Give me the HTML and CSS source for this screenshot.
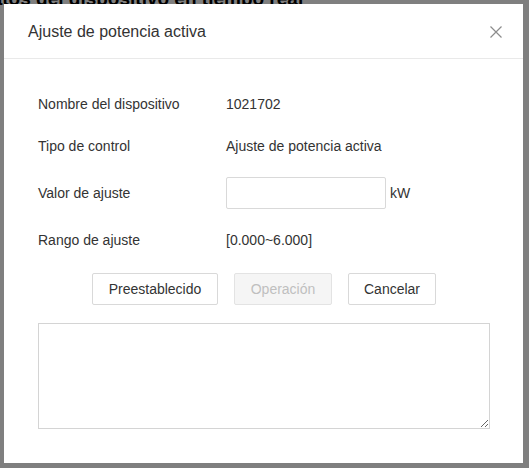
FILE: index.html
```html
<!DOCTYPE html>
<html lang="es">
<head>
<meta charset="utf-8">
<title>Ajuste de potencia activa</title>
<link rel="stylesheet" href="styles.css">
</head>
<body>
<div class="page">
  <div class="page-title">Datos del dispositivo en tiempo real</div>
</div>
<div class="mask"></div>
<div class="dialog">
  <div class="dialog-header">
    <div class="dialog-title">Ajuste de potencia activa</div>
    <button class="close" aria-label="Cerrar">
      <svg width="12" height="12" viewBox="0 0 12 12"><path d="M0.5 0.5 L11.5 11.5 M11.5 0.5 L0.5 11.5" stroke="#8c8c8c" stroke-width="1.2" fill="none"/></svg>
    </button>
  </div>
  <div class="dialog-body">
    <div class="row row-a">
      <div class="label">Nombre del dispositivo</div>
      <div class="value">1021702</div>
    </div>
    <div class="row row-b">
      <div class="label">Tipo de control</div>
      <div class="value">Ajuste de potencia activa</div>
    </div>
    <div class="row row-c">
      <div class="label">Valor de ajuste</div>
      <div class="value value-input">
        <input class="input" type="text">
        <span class="unit">kW</span>
      </div>
    </div>
    <div class="row row-d">
      <div class="label">Rango de ajuste</div>
      <div class="value">[0.000~6.000]</div>
    </div>
    <div class="actions">
      <button class="btn btn-preset">Preestablecido</button>
      <button class="btn btn-disabled" disabled>Operación</button>
      <button class="btn btn-cancel">Cancelar</button>
    </div>
    <textarea class="log"></textarea>
  </div>
</div>
</body>
</html>
```
FILE: styles.css
```css
* { box-sizing: border-box; }
html, body {
  margin: 0;
  padding: 0;
  width: 529px;
  height: 468px;
  overflow: hidden;
  font-family: "Liberation Sans", Arial, sans-serif;
}
.page {
  background: #fff;
  height: 468px;
}
.page-title {
  font-size: 19px;
  font-weight: bold;
  color: #000;
  margin-left: -22px;
  margin-top: -11px;
  line-height: 20px;
  white-space: nowrap;
}
.mask {
  position: absolute;
  left: 0; top: 0; right: 0; bottom: 0;
  background: rgba(0, 0, 0, 0.5);
}
.dialog {
  position: absolute;
  left: 4px;
  top: 4px;
  width: 519px;
  height: 459px;
  background: #fff;
  display: flex;
  flex-direction: column;
}
.dialog-header {
  height: 55px;
  border-bottom: 1px solid #e9e9e9;
  display: flex;
  align-items: center;
  justify-content: space-between;
  padding: 0 21px 0 24px;
}
.dialog-title {
  font-size: 16px;
  color: #333;
  line-height: 20px;
  margin-top: 1px;
}
.close {
  border: 0;
  background: none;
  padding: 0;
  width: 12px;
  height: 12px;
  display: flex;
  margin-top: 2px;
}
.dialog-body {
  padding: 24px 33px 0 34px;
  display: flex;
  flex-direction: column;
}
.row {
  display: flex;
  align-items: center;
  font-size: 14px;
  color: #333;
}
.row-a { height: 42px; }
.row-b { height: 42px; }
.row-c { height: 52px; }
.row-d { height: 42px; }
.label {
  width: 188px;
  flex: none;
}
.value-input {
  display: flex;
  align-items: center;
}
.input {
  width: 160px;
  height: 32px;
  border: 1px solid #d9d9d9;
  border-radius: 2px;
  outline: none;
  font-size: 14px;
  padding: 0 6px;
  margin: 0;
}
.unit {
  margin-left: 4px;
  color: #333;
}
.actions {
  margin-top: 12px;
  display: flex;
  justify-content: center;
  gap: 16px;
}
.btn {
  height: 32px;
  border: 1px solid #d9d9d9;
  border-radius: 2px;
  background: #fff;
  color: #333;
  font-family: "Liberation Sans", Arial, sans-serif;
  font-size: 14px;
  padding: 0;
}
.btn-preset { width: 126px; }
.btn-disabled {
  width: 98px;
  background: #f5f5f5;
  color: #bfbfbf;
  border-color: #e3e3e3;
}
.btn-cancel { width: 88px; }
.log {
  margin-top: 18px;
  width: 452px;
  height: 106px;
  border: 1px solid #d4d4d4;
  border-radius: 0;
  outline: none;
  font-family: "Liberation Sans", Arial, sans-serif;
  font-size: 14px;
  padding: 4px;
}
```
